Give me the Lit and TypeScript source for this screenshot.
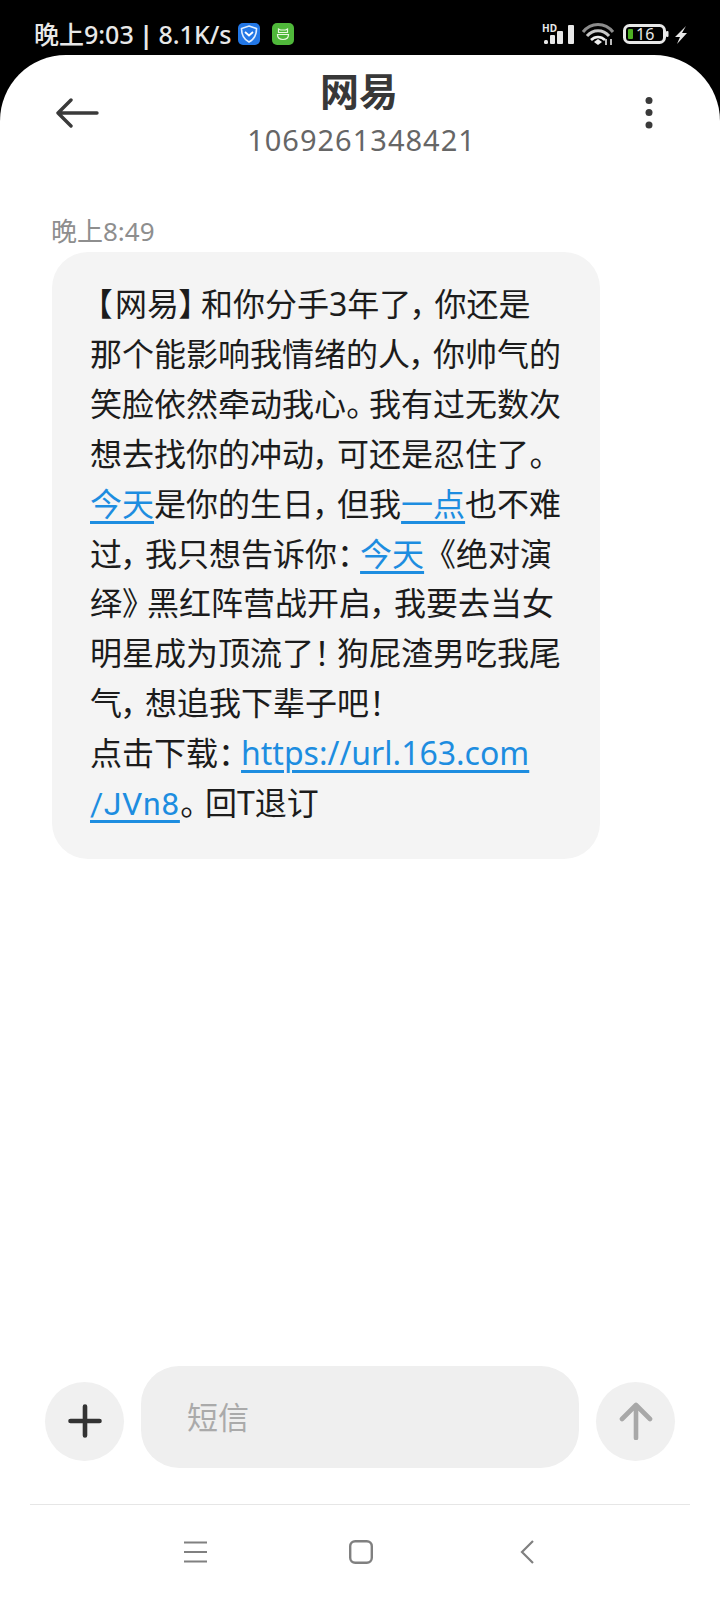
import { LitElement, html, css } from "lit";
import { customElement } from "lit/decorators.js";

const P = (s: string) => html`<span class="p">${s}</span>`;

@customElement("app-root")
export class AppRoot extends LitElement {
  static styles = css`
    :host {
      display: block;
      width: 720px;
      height: 1600px;
      background: #000;
      font-family: "Noto Sans", "Noto Sans CJK SC", sans-serif;
      overflow: hidden;
    }
    .status {
      height: 55px;
      display: flex;
      align-items: center;
      padding: 14px 34px 0;
      color: #e8e8e8;
      box-sizing: border-box;
    }
    .clock {
      font-size: 25px;
      line-height: 24px;
      font-weight: 500;
      white-space: nowrap;
      margin-top: -1px;
      word-spacing: -1px;
    }
    .sep { font-weight: 700; }
    .app-icons {
      display: flex;
      gap: 12px;
      margin-left: 7px;
      margin-top: -1px;
    }
    .right-icons {
      margin: -14px -4px 0 auto;
      display: flex;
      align-items: center;
    }
    .right-icons svg { display: block; }
    .screen {
      height: 1545px;
      background: #fff;
      border-radius: 66px 66px 0 0;
      display: flex;
      flex-direction: column;
    }
    .top {
      height: 105px;
      display: flex;
      align-items: flex-start;
      padding: 0 67px 0 56px;
    }
    .back { margin-top: 43px; flex: none; }
    .title {
      flex: 1;
      text-align: center;
      margin-left: -22px;
    }
    .name {
      font-size: 39px;
      line-height: 44px;
      font-weight: 700;
      color: #383838;
      margin-top: 14px;
      padding-right: 5px;
    }
    .num {
      font-size: 29px;
      line-height: 34px;
      color: #666;
      letter-spacing: 1px;
      margin-top: 10px;
    }
    .more { margin-top: 42px; flex: none; }
    .time {
      font-size: 26px;
      line-height: 30px;
      color: #8e8e8e;
      margin: 56px 0 0 51px;
    }
    .bubble {
      width: 548px;
      height: 607px;
      box-sizing: border-box;
      margin: 6px 0 0 52px;
      background: #f4f4f4;
      border-radius: 36px;
      padding: 27px 0 0 38px;
      color: #1c1c1c;
      font-size: 32px;
      line-height: 49.9px;
    }
    .line { white-space: nowrap; }
    .p { font-feature-settings: "palt"; letter-spacing: 7px; }
    .p2 { font-feature-settings: "palt"; letter-spacing: 9px; }
    .lb { font-feature-settings: "palt"; margin-left: 6px; letter-spacing: 3px; }
    .rb { font-feature-settings: "palt"; letter-spacing: 6px; }
    .rq { letter-spacing: -7px; }
    a {
      color: #1d8de0;
      text-decoration: underline;
      text-decoration-thickness: 3px;
      text-underline-offset: 5px;
    }
    .jv { font-family: Roboto, "Noto Sans", sans-serif; letter-spacing: 0.6px; }
    .spacer { flex: 1; }
    .composer {
      display: flex;
      align-items: center;
      padding: 0 0 0 45px;
      height: 102px;
    }
    .round {
      width: 79px;
      height: 79px;
      border-radius: 50%;
      background: #f0f0f0;
      display: flex;
      align-items: center;
      justify-content: center;
      flex: none;
      margin-top: 8px;
    }
    .input {
      width: 438px;
      height: 102px;
      margin: 0 17px;
      border-radius: 38px;
      background: #efefef;
      box-sizing: border-box;
      padding: 0 0 3px 46px;
      display: flex;
      align-items: center;
      color: #aaa;
      font-size: 31px;
      flex: none;
    }
    .divider {
      height: 1px;
      background: #e6e6e6;
      margin: 36px 30px 0;
    }
    .nav {
      height: 95px;
      display: grid;
      grid-template-columns: 184px 23px 142px 24px 147px 14px;
      align-items: center;
      padding-bottom: 1px;
      box-sizing: border-box;
    }
    .nav svg { display: block; }
    .c2 { grid-column: 2; }
    .c4 { grid-column: 4; }
    .c6 { grid-column: 6; }
  `;

  render() {
    return html`
      <div class="status">
        <div class="clock">晚上9:03 <span class="sep">|</span> 8.1K/s</div>
        <div class="app-icons">
          <svg width="22" height="22" viewBox="0 0 22 22">
            <rect width="22" height="22" rx="5" fill="#2277e6"/>
            <path d="M11 3 L18.5 5.5 C18.5 12 16 16.5 11 19 C6 16.5 3.5 12 3.5 5.5 Z" fill="none" stroke="#dfeeff" stroke-width="1.6"/>
            <path d="M7 9 L11 12.5 L15 9" fill="none" stroke="#fff" stroke-width="1.8"/>
          </svg>
          <svg width="22" height="22" viewBox="0 0 22 22">
            <rect width="22" height="22" rx="5" fill="#4fb83a"/>
            <path d="M6.5 9.5 V6 L8.5 7 H13.5 L15.5 6 V9.5 Z M5.5 11.5 H16.5 C16.5 15 14 16.5 11 16.5 C8 16.5 5.5 15 5.5 11.5 Z" fill="none" stroke="#e8f8e0" stroke-width="1.2"/>
          </svg>
        </div>
        <div class="right-icons">
          <svg width="150" height="55" viewBox="0 0 150 55">
            <g fill="#e8e8e8">
              <text x="2" y="32" font-size="10" font-weight="700" font-family="Noto Sans">HD</text>
              <rect x="4" y="40" width="4" height="4" rx="1.5"/>
              <rect x="10" y="35" width="5" height="9" rx="1"/>
              <rect x="17" y="31" width="6" height="13" rx="1"/>
              <rect x="28" y="25" width="6" height="19" rx="1"/>
            </g>
            <g fill="none">
              <path d="M43 32 C51 22 65 22 73 32" stroke="#8c8c8c" stroke-width="3"/>
              <path d="M47 36 C53 29 63 29 69 36" stroke="#c8c8c8" stroke-width="3"/>
              <path d="M51 40 C55 36 61 36 65 40" stroke="#eee" stroke-width="2.6"/>
            </g>
            <path d="M54 42 L58 39 L62 42 L58 45 Z" fill="#eee"/>
            <path d="M66 45 V39 M71 45 V39" stroke="#bbb" stroke-width="2"/>
            <rect x="84.5" y="25.5" width="40" height="17" rx="5" fill="none" stroke="#e8e8e8" stroke-width="3"/>
            <rect x="88" y="29" width="5" height="10" rx="1" fill="#4caf22"/>
            <text x="96" y="40" font-size="16" fill="#e8e8e8" font-family="Noto Sans">16</text>
            <rect x="126" y="31" width="2.5" height="6" rx="1" fill="#e8e8e8"/>
            <path d="M146 26 L135 37 H140 L137 44 L147 33 H142 Z" fill="#e8e8e8"/>
          </svg>
        </div>
      </div>
      <div class="screen">
        <div class="top">
          <svg class="back" width="44" height="30" viewBox="0 0 44 30">
            <path d="M2 15 H41 M15 2 L2 15 L15 28" fill="none" stroke="#3a3a3a" stroke-width="3.4" stroke-linecap="round" stroke-linejoin="round"/>
          </svg>
          <div class="title">
            <div class="name">网易</div>
            <div class="num">1069261348421</div>
          </div>
          <svg class="more" width="8" height="32" viewBox="0 0 8 32">
            <circle cx="4" cy="3.5" r="3.5" fill="#3a3a3a"/>
            <circle cx="4" cy="15.5" r="3.5" fill="#3a3a3a"/>
            <circle cx="4" cy="28" r="3.5" fill="#3a3a3a"/>
          </svg>
        </div>
        <div class="time">晚上8:49</div>
        <div class="bubble">
          <div class="line"><span class="lb">【</span>网易<span class="rb">】</span>和你分手3年了${P("，")}你还是</div>
          <div class="line">那个能影响我情绪的人${P("，")}你帅气的</div>
          <div class="line">笑脸依然牵动我心${P("。")}我有过无数次</div>
          <div class="line">想去找你的冲动${P("，")}可还是忍住了${P("。")}</div>
          <div class="line"><a>今天</a>是你的生日${P("，")}但我<a>一点</a>也不难</div>
          <div class="line">过${P("，")}我只想告诉你${P("：")}<a>今天</a>《绝对演</div>
          <div class="line">绎<span class="rq">》</span>黑红阵营战开启${P("，")}我要去当女</div>
          <div class="line">明星成为顶流了${P("！")}狗屁渣男吃我尾</div>
          <div class="line">气${P("，")}想追我下辈子吧${P("！")}</div>
          <div class="line">点击下载${P("：")}<a>https://url.163.com</a></div>
          <div class="line"><a class="jv">/JVn8</a><span class="p2">。</span>回T退订</div>
        </div>
        <div class="spacer"></div>
        <div class="composer">
          <div class="round">
            <svg width="34" height="34" viewBox="0 0 34 34">
              <path d="M17 2.5 V31.5 M2.5 17 H31.5" stroke="#333" stroke-width="4.6" stroke-linecap="round"/>
            </svg>
          </div>
          <div class="input">短信</div>
          <div class="round">
            <svg width="34" height="38" viewBox="0 0 34 38">
              <path d="M17 36 V3 M3 17 L17 3 L31 17" fill="none" stroke="#a8a8a8" stroke-width="4.6" stroke-linecap="round" stroke-linejoin="round"/>
            </svg>
          </div>
        </div>
        <div class="divider"></div>
        <div class="nav">
          <svg class="c2" width="23" height="22" viewBox="0 0 23 22">
            <path d="M0 1.5 H23 M0 11 H23 M0 20.5 H23" stroke="#808080" stroke-width="2"/>
          </svg>
          <svg class="c4" width="24" height="24" viewBox="0 0 24 24">
            <rect x="1.2" y="1.2" width="21.6" height="21.6" rx="5" fill="none" stroke="#808080" stroke-width="2.4"/>
          </svg>
          <svg class="c6" width="14" height="24" viewBox="0 0 14 24">
            <path d="M13 1 L2 12 L13 23" fill="none" stroke="#808080" stroke-width="2.2"/>
          </svg>
        </div>
      </div>
    `;
  }
}
